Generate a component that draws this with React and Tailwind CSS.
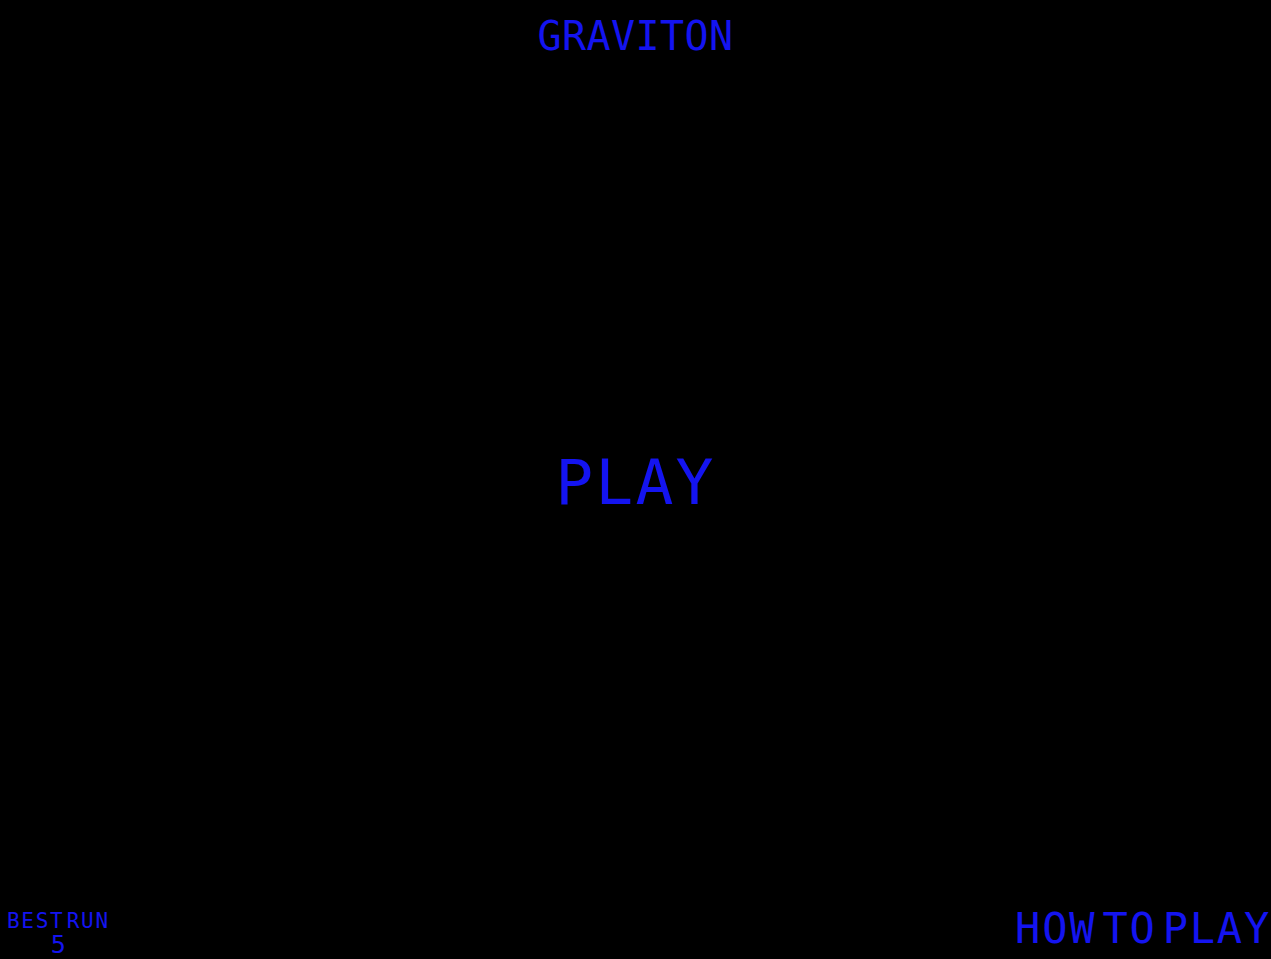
export default function App() {
  return (
    <div className="flex h-screen w-full flex-col overflow-hidden bg-black text-[#1414f0] font-['DejaVu_Sans_Mono',monospace]">
      <header className="flex justify-center pt-4">
        <h1 className="text-[40px] leading-none tracking-[0.4px] font-normal">GRAVITON</h1>
      </header>
      <main className="flex flex-1 items-center justify-center">
        <button className="text-[63px] leading-none tracking-[2.2px] cursor-pointer">PLAY</button>
      </main>
      <footer className="flex items-end justify-between pb-[2px]">
        <div className="flex flex-col items-center pl-[7px]">
          <span className="text-[21px] leading-none tracking-[1.7px] [word-spacing:-12px]">BEST RUN</span>
          <span className="text-[25px] leading-none">5</span>
        </div>
        <button className="mb-[7px] text-[42px] leading-none tracking-[1.8px] [word-spacing:-21px] cursor-pointer">HOW TO PLAY</button>
      </footer>
    </div>
  );
}
